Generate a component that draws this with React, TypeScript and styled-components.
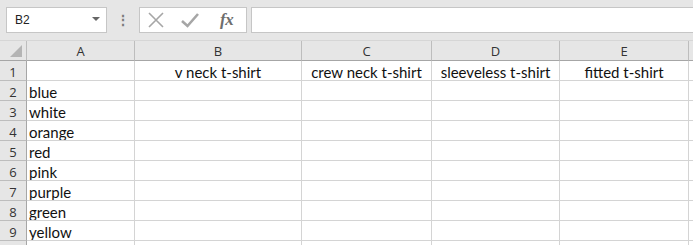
import React from "react";
import styled, { createGlobalStyle } from "styled-components";

const columns = ["A", "B", "C", "D", "E", ""];
const headerRow = ["", "v neck t-shirt", "crew neck t-shirt", "sleeveless t-shirt", "fitted t-shirt", ""];
const colors = ["blue", "white", "orange", "red", "pink", "purple", "green", "yellow"];

export default function App() {
  return (
    <Wrapper>
      <GlobalStyle />
      <FormulaBar>
        <NameBox>
          <span>B2</span>
          <Caret />
        </NameBox>
        <Grip>⋮</Grip>
        <IconBox>
          <svg width="20" height="20" viewBox="0 0 20 20">
            <path d="M3 3 L17 17 M17 3 L3 17" stroke="#a6a6a6" strokeWidth="1.6" fill="none" />
          </svg>
          <CheckIcon width="22" height="20" viewBox="0 0 22 20">
            <path d="M3 11 L8.5 16 L19 4" stroke="#a6a6a6" strokeWidth="2.6" fill="none" />
          </CheckIcon>
          <Fx>fx</Fx>
        </IconBox>
        <FormulaInput />
      </FormulaBar>
      <Sheet>
        <Corner>
          <CornerMark />
        </Corner>
        {columns.map((c, i) => (
          <ColHeader key={"h" + i}>{c}</ColHeader>
        ))}
        <RowHeader>1</RowHeader>
        {headerRow.map((t, i) => (
          <Cell key={"r1" + i} $center>
            {t}
          </Cell>
        ))}
        {colors.map((color, r) => (
          <React.Fragment key={color}>
            <RowHeader>{r + 2}</RowHeader>
            <Cell>{color}</Cell>
            {[0, 1, 2, 3, 4].map((i) => (
              <Cell key={i} />
            ))}
          </React.Fragment>
        ))}
        <RowHeader />
        {columns.map((_, i) => (
          <Cell key={"x" + i} />
        ))}
      </Sheet>
    </Wrapper>
  );
}

const GlobalStyle = createGlobalStyle`
  body {
    margin: 0;
    background: #ffffff;
  }
`;

const Wrapper = styled.div`
  width: 693px;
  height: 245px;
  overflow: hidden;
  font-family: "Liberation Sans", Arial, sans-serif;
`;

const FormulaBar = styled.div`
  display: flex;
  align-items: flex-start;
  height: 41px;
  padding: 7px 0 0 6px;
  box-sizing: border-box;
  background: #e6e6e6;
  border-bottom: 1px solid #d6d6d6;
`;

const NameBox = styled.div`
  display: flex;
  align-items: center;
  justify-content: space-between;
  width: 101px;
  height: 26px;
  box-sizing: border-box;
  padding: 0 6px 0 8px;
  background: #fff;
  border: 1px solid #c6c6c6;
  font-size: 12px;
  color: #222;
`;

const Caret = styled.div`
  width: 0;
  height: 0;
  border-left: 4px solid transparent;
  border-right: 4px solid transparent;
  border-top: 4px solid #666;
  margin-top: -2px;
`;

const Grip = styled.div`
  width: 32px;
  height: 26px;
  line-height: 26px;
  text-align: center;
  color: #7a7a7a;
  font-size: 14px;
  font-weight: bold;
`;

const IconBox = styled.div`
  display: flex;
  align-items: center;
  width: 108px;
  height: 26px;
  box-sizing: border-box;
  padding-left: 6px;
  background: #fff;
  border: 1px solid #c6c6c6;
`;

const CheckIcon = styled.svg`
  margin-left: 13px;
`;

const Fx = styled.span`
  margin-left: 19px;
  font-family: "Liberation Serif", "Times New Roman", serif;
  font-style: italic;
  font-weight: bold;
  font-size: 17px;
  color: #6e6e6e;
  letter-spacing: -0.5px;
`;

const FormulaInput = styled.div`
  flex: 1;
  height: 26px;
  margin-left: 4px;
  box-sizing: border-box;
  background: #fff;
  border: 1px solid #c6c6c6;
  border-right: none;
`;

const Sheet = styled.div`
  display: grid;
  grid-template-columns: 27px 108px 167px 130px 128px 129px 40px;
  grid-template-rows: 20px repeat(10, 20px);
  background: #fff;
`;

const Corner = styled.div`
  position: relative;
  background: #e6e6e6;
  border-right: 1px solid #bdbdbd;
  border-bottom: 1px solid #a6a6a6;
`;

const CornerMark = styled.div`
  position: absolute;
  right: 4px;
  bottom: 3px;
  width: 0;
  height: 0;
  border-left: 12px solid transparent;
  border-bottom: 12px solid #b4b4b4;
`;

const ColHeader = styled.div`
  display: flex;
  align-items: center;
  justify-content: center;
  padding-top: 1px;
  background: #e6e6e6;
  border-right: 1px solid #bdbdbd;
  border-bottom: 1px solid #a6a6a6;
  font-family: "Open Sans", sans-serif;
  font-size: 13px;
  color: #333;
`;

const RowHeader = styled.div`
  display: flex;
  align-items: center;
  justify-content: center;
  padding-top: 3px;
  background: #e6e6e6;
  border-right: 1px solid #a6a6a6;
  border-bottom: 1px solid #bdbdbd;
  font-family: "Open Sans", sans-serif;
  font-size: 13px;
  color: #333;
`;

const Cell = styled.div<{ $center?: boolean }>`
  display: flex;
  align-items: flex-end;
  justify-content: ${(p) => (p.$center ? "center" : "flex-start")};
  padding: 0 2px 1px 2px;
  line-height: 14px;
  border-right: 1px solid #d4d4d4;
  border-bottom: 1px solid #d4d4d4;
  font-family: Lato, "Liberation Sans", sans-serif;
  font-size: 15px;
  color: #111;
  white-space: nowrap;
  overflow: hidden;
`;
